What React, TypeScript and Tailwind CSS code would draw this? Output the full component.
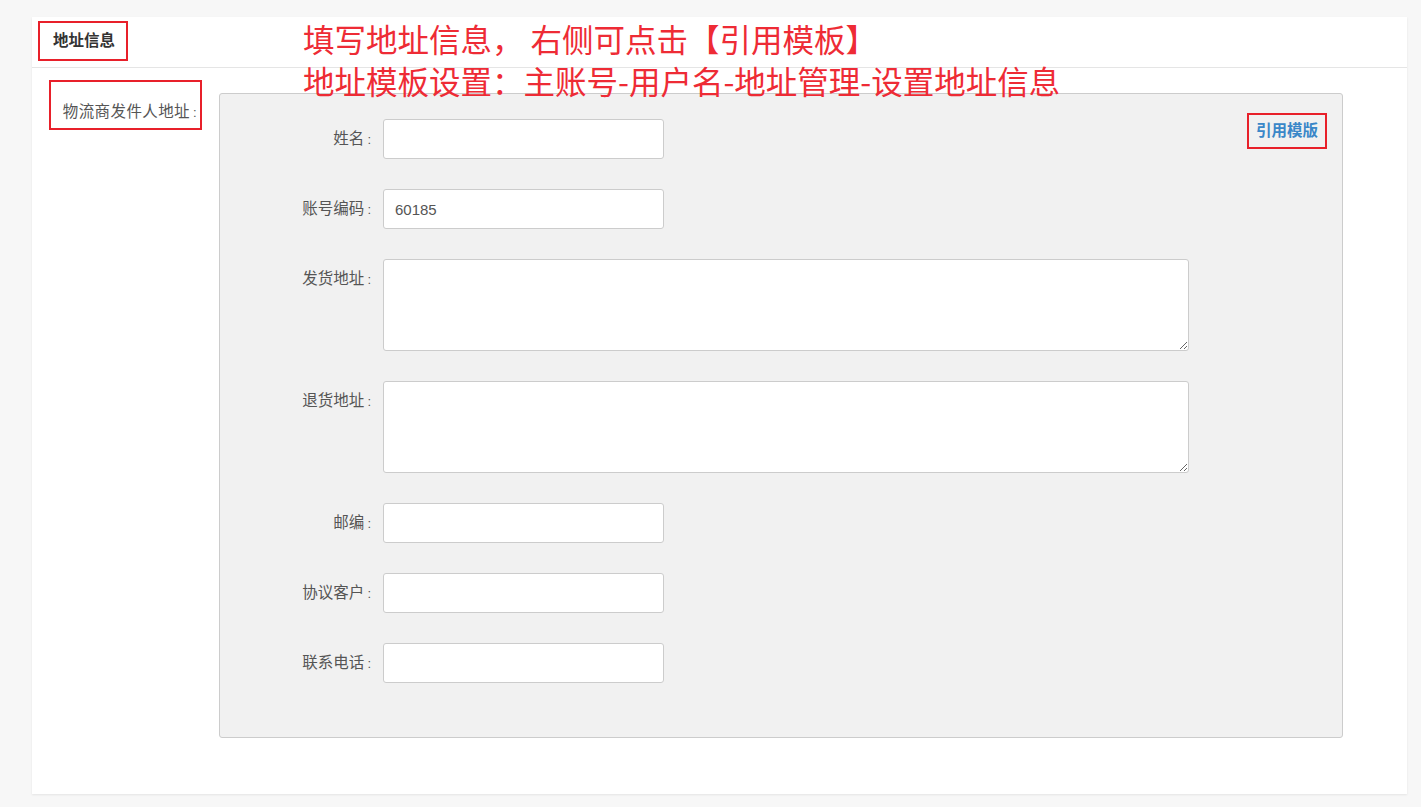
import React from "react";

const font = { fontFamily: '"Liberation Sans", "Noto Sans CJK SC", sans-serif' };

function Row({ label, value, area }: { label: string; value?: string; area?: boolean }) {
  return (
    <div className="flex items-start">
      <div className="w-[152px] shrink-0 text-right text-[15.5px] leading-[20px] text-[#555] pt-[10px] pr-[1px] whitespace-nowrap">
        {label}
        <span className="ml-[3px] text-[13px]">:</span>
      </div>
      {area ? (
        <textarea
          className="ml-[11px] w-[806px] h-[92px] bg-white border border-[#ccc] rounded-[3px] outline-none px-3 py-2 text-[14px] text-[#555]"
          defaultValue={value}
        />
      ) : (
        <input
          className="ml-[11px] w-[281px] h-[40px] bg-white border border-[#ccc] rounded-[3px] outline-none px-[11px] text-[15px] text-[#555]"
          defaultValue={value}
        />
      )}
    </div>
  );
}

export default function App() {
  return (
    <div className="min-h-[807px] bg-[#f7f7f7] pt-[17px] pb-[13px] pl-[32px] pr-[14px]" style={font}>
      <div className="relative bg-white h-[777px] shadow-[0_1px_2px_rgba(0,0,0,0.08)]">
        {/* header */}
        <div className="h-[51px] border-b border-[#e5e5e5] pt-[4px] pl-[6px]">
          <div className="w-[90px] h-[40px] border-2 border-[#e8202a] flex items-center pl-[13px]">
            <span className="text-[15.5px] font-bold text-[#333] whitespace-nowrap">地址信息</span>
          </div>
        </div>

        {/* body */}
        <div className="flex pt-[12px] pl-[17px] pr-[64px]">
          <div className="w-[153px] h-[50px] shrink-0 border-2 border-[#e8202a] pt-[20px] pr-[3px] text-right text-[15.5px] leading-[20px] text-[#555] whitespace-nowrap tracking-[0.4px]">
            物流商发件人地址<span className="ml-[3px] text-[13px]">:</span>
          </div>
          <div className="relative ml-[17px] mt-[13px] flex-1 h-[645px] bg-[#f1f1f1] border border-[#ccc] rounded-[3px] pt-[25px]">
            <div className="absolute right-[15px] top-[19px] w-[80px] h-[36px] border-2 border-[#e8202a] flex items-center justify-center">
              <span className="text-[15.5px] font-bold text-[#3a87c8] whitespace-nowrap">引用模版</span>
            </div>
            <div className="flex flex-col gap-[30px]">
              <Row label="姓名" />
              <Row label="账号编码" value="60185" />
              <Row label="发货地址" area />
              <Row label="退货地址" area />
              <Row label="邮编" />
              <Row label="协议客户" />
              <Row label="联系电话" />
            </div>
          </div>
        </div>

        {/* annotation overlay */}
        <div
          className="absolute z-10 left-[271px] top-0 text-[31.5px] leading-[42px] text-[#ee2b35] whitespace-nowrap"
          style={{ fontFamily: '"Noto Sans CJK SC", sans-serif' }}
        >
          <div>填写地址信息， 右侧可点击【引用模板】</div>
          <div>地址模板设置：主账号-用户名-地址管理-设置地址信息</div>
        </div>
      </div>
    </div>
  );
}
